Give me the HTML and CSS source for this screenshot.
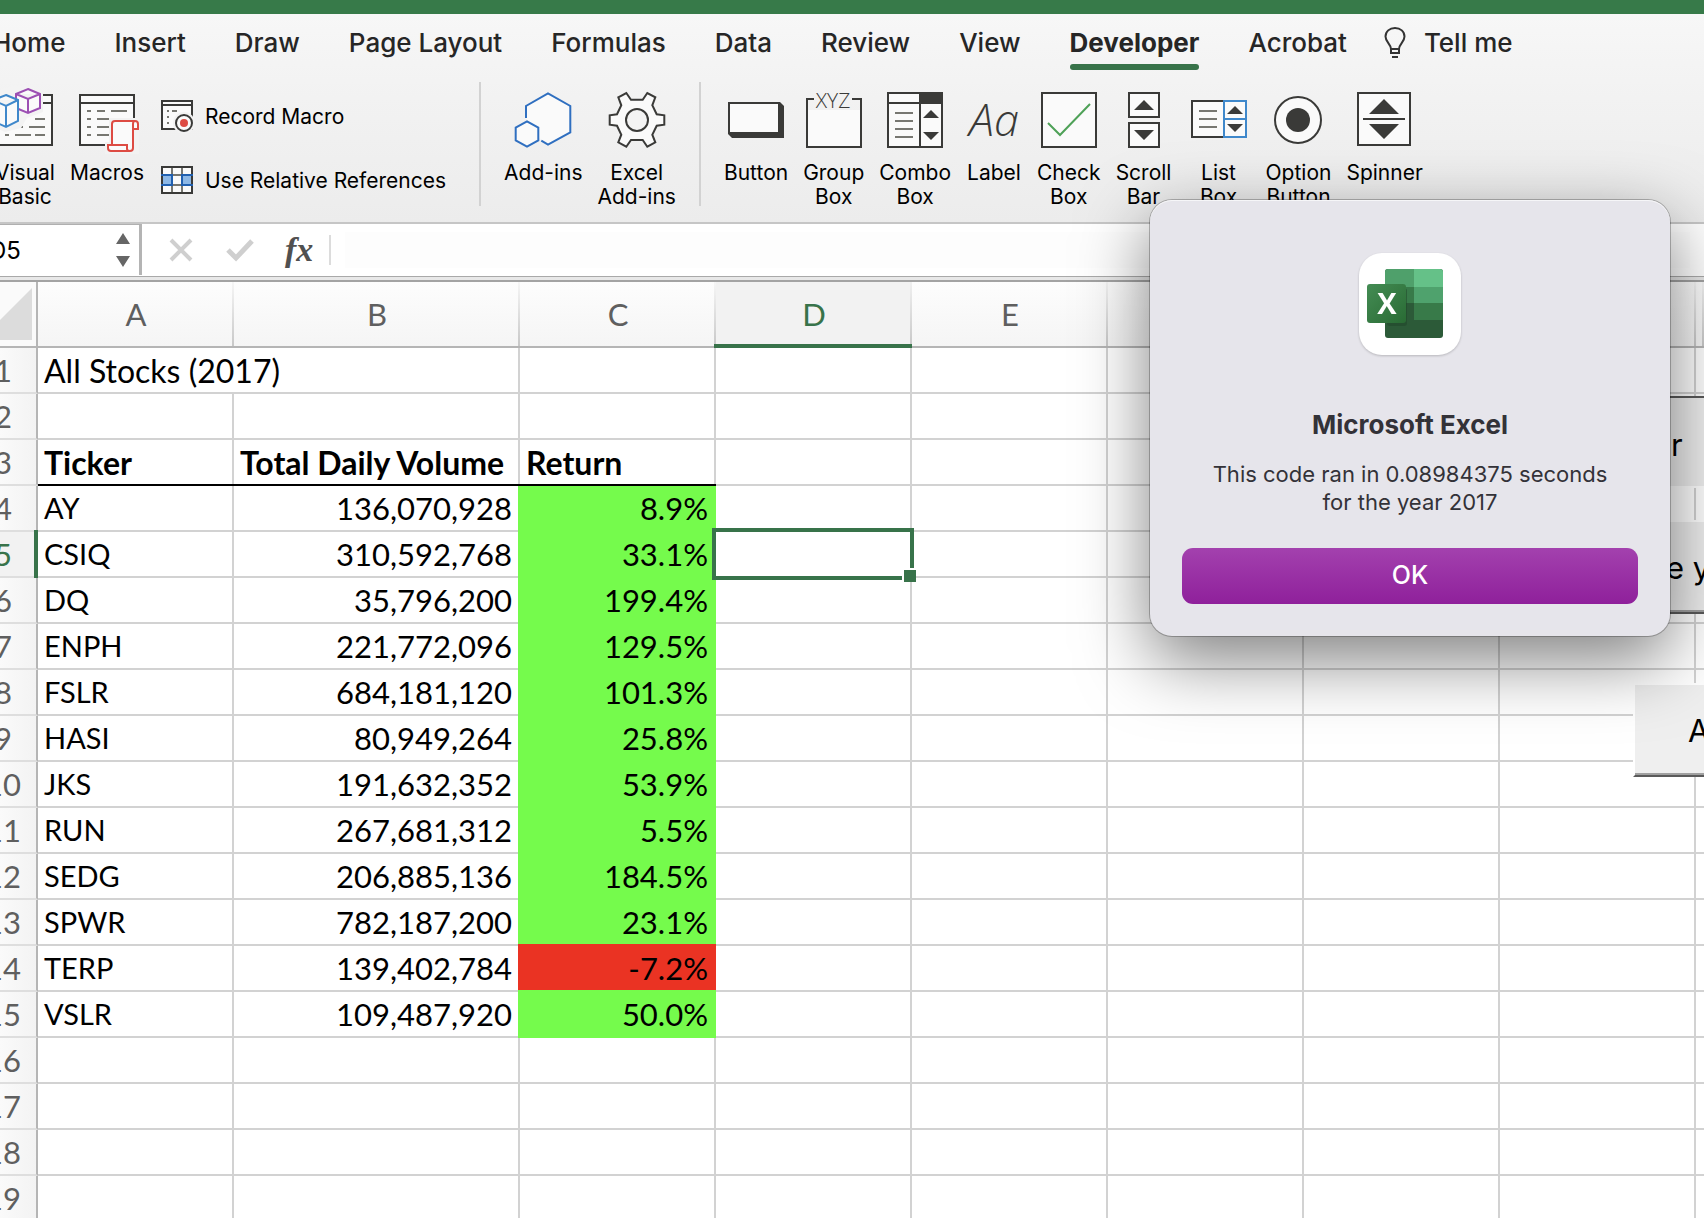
FILE: index.html
```html
<!DOCTYPE html>
<html lang="en">
<head>
<meta charset="utf-8">
<title>Microsoft Excel</title>
<link rel="stylesheet" href="styles.css">
</head>
<body>
<div class="app">
  <div class="titlebar"></div>
  <header class="ribbon">
    <nav class="tabs">
      <a class="tab" href="#">Home</a>
      <a class="tab" href="#">Insert</a>
      <a class="tab" href="#">Draw</a>
      <a class="tab" href="#">Page Layout</a>
      <a class="tab" href="#">Formulas</a>
      <a class="tab" href="#">Data</a>
      <a class="tab" href="#">Review</a>
      <a class="tab" href="#">View</a>
      <a class="tab tab-active" href="#">Developer</a>
      <a class="tab" href="#">Acrobat</a>
      <a class="tab tell-me" href="#">
        <svg class="bulb" width="22" height="32" viewBox="0 0 22 32" fill="none" stroke="#333" stroke-width="2">
          <path d="M7 22C7 17 1.500 15 1.500 9.500C1.500 4.500 5.500 1 11 1S20.500 4.500 20.500 9.500C20.500 15 15 17 15 22V26H7ZM7 22H15M8 30H14"/>
        </svg>
        Tell me
      </a>
    </nav>
    <div class="commands">
      <button class="cmd">
        <svg class="icon" viewBox="0 0 56 56" fill="none" stroke-width="2">
          <path d="M1 3H55V53H1Z" fill="#fafafa" stroke="#3a3a38"/>
          <path d="M1 11H55" stroke="#3a3a38"/>
          <path d="M38 27H48M18 35H26M32 35H48M8 43H12M18 43H34M38 43H48" stroke="#777771"/>
          <path d="M17 -6L31 -7L46 0V20L30 26L24 36L8 40L-8 33V0Z" fill="#f3f3f3"/>
          <path d="M31 -3L43 2V16L31 21L19 16V2ZM19 2L31 7L43 2M31 7V21" fill="#fafafa" stroke="#9c4fb3"/>
          <path d="M9 3L21 8V29L9 35L-4 29V8ZM-4 8L9 14L21 8M9 14V35" fill="#fafafa" stroke="#3f88cb"/>
        </svg>
        <span>Visual<br>Basic</span>
      </button>
      <button class="cmd">
        <svg class="icon" viewBox="0 0 56 56" fill="none" stroke-width="2">
          <path d="M1 3H55V53H1Z" fill="#fafafa" stroke="#3a3a38"/>
          <path d="M1 11H55" stroke="#3a3a38"/>
          <path d="M8 19H12M18 19H26M32 19H48M8 27H12M18 27H36M8 35H12M18 35H30M8 43H12M18 43H30" stroke="#777771"/>
          <path d="M30 26H60V62H26V50H30Z" fill="#f2f2f2"/>
          <path d="M33 53V32C33 30 34 29 36 29H56C58 29 59 30 59 32V37H54V56C54 58 53 59 51 59H32C30 59 29 58 29 56V53H48V57C48 58 49 59 51 59M54 37V32C54 30 55 29 56 29" fill="#fafafa" stroke="#dd4b43"/>
        </svg>
        <span>Macros</span>
      </button>
      <div class="stack">
        <button class="cmd-row">
          <svg class="icon-small" viewBox="0 0 32 32" fill="none" stroke-width="2">
            <path d="M1 1H31V29H1Z" fill="#fafafa" stroke="#3a3a38"/>
            <path d="M1 5H31" stroke="#3a3a38"/>
            <path d="M6 11H8M11 11H16M6 17H8M6 23H8" stroke="#777771"/>
            <circle cx="23" cy="23" r="11" fill="#f2f2f2"/>
            <circle cx="23" cy="23" r="8" fill="#fafafa" stroke="#3a3a38"/>
            <circle cx="23" cy="23" r="4" fill="#dd4b43"/>
          </svg>
          Record Macro
        </button>
        <button class="cmd-row">
          <svg class="icon-small" viewBox="0 0 32 32" fill="none" stroke-width="2">
            <path d="M1 3H31V29H1Z" fill="#fafafa"/>
            <path d="M1 11H11V21H1ZM21 11H31V21H21Z" fill="#8db8e6"/>
            <path d="M11 3V29M21 3V29M11 11H21M11 21H21" stroke="#777771"/>
            <path d="M1 3H31V29H1Z" stroke="#3a3a38"/>
            <path d="M0 11H11V21H0M32 11H21V21H32" stroke="#2160b0"/>
          </svg>
          Use Relative References
        </button>
      </div>
      <div class="divider"></div>
      <button class="cmd">
        <svg class="icon" viewBox="0 0 56 56" fill="#fafafa" stroke="#2f6fc0" stroke-width="2">
          <path d="M11 26V14L33 1.300L55.300 14V40.300L33 52.700L26.300 48.700"/>
          <path d="M12 29.300L23.300 35.700V48.300L12 54.700L.7 48.300V35.700Z"/>
        </svg>
        <span>Add-ins</span>
      </button>
      <button class="cmd">
        <svg class="icon" viewBox="0 0 56 56" fill="#fafafa" stroke="#3a3a38" stroke-width="2">
          <path d="M9.300 5.300L17.300 1L22 7.700H33.700L38.300 1L46.300 5.300L43.300 13.300L47.700 22.300L55.300 23.300V32.700L47.700 33.700L43.300 42.700L46.300 50.300L38.300 54.700L33.700 48H22L17.300 54.700L9.300 50.300L12.300 42.700L8 33.700L.7 32.700V23.300L8 22.300L12.300 13.300Z"/>
          <circle cx="28" cy="28" r="11" fill="#f3f3f3"/>
        </svg>
        <span>Excel<br>Add-ins</span>
      </button>
      <div class="divider"></div>
      <button class="cmd">
        <svg class="icon" viewBox="0 0 56 56">
          <path d="M0 10H52L56 14V46H4L0 42Z" fill="#3a3a38"/>
          <path d="M2 12H50V40H2Z" fill="#fafafa"/>
        </svg>
        <span>Button</span>
      </button>
      <button class="cmd">
        <svg class="icon" viewBox="0 0 56 56">
          <path d="M2 18H54V54H2Z" fill="#fafafa"/>
          <path d="M8 7H1V55H55V7H46" fill="none" stroke="#3a3a38" stroke-width="2"/>
          <text class="glyph-xyz" x="27" y="16" text-anchor="middle">XYZ</text>
        </svg>
        <span>Group<br>Box</span>
      </button>
      <button class="cmd">
        <svg class="icon" viewBox="0 0 56 56">
          <path d="M1 1H55V55H1Z" fill="#fafafa" stroke="#3a3a38" stroke-width="2"/>
          <path d="M32 0H56V12H32Z" fill="#3a3a38"/>
          <path d="M0 11H56M33 11V56" stroke="#3a3a38" stroke-width="2"/>
          <path d="M8 21H26M8 29H26M8 37H26M8 45H26" stroke="#777771" stroke-width="2"/>
          <path d="M36 26L44 18L52 26ZM36 40L44 48L52 40Z" fill="#3a3a38"/>
        </svg>
        <span>Combo<br>Box</span>
      </button>
      <button class="cmd">
        <svg class="icon" viewBox="0 0 56 56">
          <text class="glyph-aa" x="28" y="44" text-anchor="middle">Aa</text>
        </svg>
        <span>Label</span>
      </button>
      <button class="cmd">
        <svg class="icon" viewBox="0 0 56 56" fill="none" stroke-width="2">
          <path d="M1 1H55V55H1Z" fill="#fafafa" stroke="#3a3a38"/>
          <path d="M7 31L19 43L49 12" stroke="#4ea157"/>
        </svg>
        <span>Check<br>Box</span>
      </button>
      <button class="cmd">
        <svg class="icon" viewBox="0 0 56 56">
          <path d="M13 1H43V25H13ZM13 31H43V55H13Z" fill="#fafafa" stroke="#3a3a38" stroke-width="2"/>
          <path d="M18 18L28 8L38 18ZM18 38L28 48L38 38Z" fill="#3a3a38"/>
        </svg>
        <span>Scroll<br>Bar</span>
      </button>
      <button class="cmd cmd-list">
        <svg class="icon" viewBox="0 0 56 56" fill="none" stroke-width="2">
          <path d="M33 9H1V45H33" fill="#fafafa" stroke="#3a3a38"/>
          <path d="M8 19H26M8 27H26M8 35H26" stroke="#777771"/>
          <path d="M33 9H55V45H33ZM33 27H55" fill="#fafafa" stroke="#3f88cb"/>
          <path d="M36 22L44 14L52 22ZM36 32L44 40L52 32Z" fill="#3a3a38"/>
        </svg>
        <span>List<br>Box</span>
      </button>
      <button class="cmd">
        <svg class="icon" viewBox="0 0 56 56">
          <circle cx="28" cy="28" r="23" fill="#fafafa" stroke="#3a3a38" stroke-width="2"/>
          <circle cx="28" cy="28" r="12" fill="#3a3a38"/>
        </svg>
        <span>Option<br>Button</span>
      </button>
      <button class="cmd">
        <svg class="icon" viewBox="0 0 56 56">
          <path d="M1 1H53V53H1Z" fill="#fafafa" stroke="#3a3a38" stroke-width="2"/>
          <path d="M6 27H48" stroke="#3a3a38" stroke-width="2"/>
          <path d="M12 22L27 7L42 22ZM12 32L27 47L42 32Z" fill="#3a3a38"/>
        </svg>
        <span>Spinner</span>
      </button>
    </div>
  </header>

  <div class="formula-bar">
    <div class="name-box">
      <input class="name-input" type="text" value="D5" aria-label="Name box">
      <svg width="14" height="36" viewBox="0 0 14 36" fill="#666"><path d="M0 12L7 1L14 12ZM0 24L7 35L14 24Z"/></svg>
    </div>
    <div class="formula-tools">
      <button class="tool" aria-label="Cancel">
        <svg width="28" height="24" viewBox="0 0 28 24" fill="none" stroke="#cfcfcf" stroke-width="4"><path d="M4 2L24 22M24 2L4 22"/></svg>
      </button>
      <button class="tool" aria-label="Enter">
        <svg width="28" height="24" viewBox="0 0 28 24" fill="none" stroke="#cfcfcf" stroke-width="5"><path d="M2 12L10 20L26 3"/></svg>
      </button>
      <button class="tool fx" aria-label="Insert function">fx</button>
    </div>
    <input class="formula-input" type="text" aria-label="Formula">
  </div>

  <main class="sheet">
    <table class="grid">
      <colgroup>
        <col class="col-rows"><col class="col-std"><col class="col-wide"><col class="col-std"><col class="col-std"><col class="col-std"><col class="col-std"><col class="col-std"><col class="col-std"><col>
      </colgroup>
      <thead>
        <tr><th class="corner"><svg width="52" height="52" viewBox="0 0 52 52"><path d="M52 0V52H0Z" fill="#dcdcdc"/></svg></th><th>A</th><th>B</th><th>C</th><th class="col-active">D</th><th>E</th><th>F</th><th>G</th><th>H</th><th></th></tr>
      </thead>
      <tbody>
        <tr><th>1</th><td class="title" colspan="2">All Stocks (2017)</td><td></td><td></td><td></td><td></td><td></td><td></td><td></td></tr>
        <tr><th>2</th><td></td><td></td><td></td><td></td><td></td><td></td><td></td><td></td><td></td></tr>
        <tr><th>3</th><td class="head">Ticker</td><td class="head">Total Daily Volume</td><td class="head">Return</td><td></td><td></td><td></td><td></td><td></td><td></td></tr>
        <tr class="first"><th>4</th><td class="ticker">AY</td><td class="num">136,070,928</td><td class="num gain">8.9%</td><td></td><td></td><td></td><td></td><td></td><td></td></tr>
        <tr><th class="row-active">5</th><td class="ticker">CSIQ</td><td class="num">310,592,768</td><td class="num gain">33.1%</td><td class="selected"></td><td></td><td></td><td></td><td></td><td></td></tr>
        <tr><th>6</th><td class="ticker">DQ</td><td class="num">35,796,200</td><td class="num gain">199.4%</td><td></td><td></td><td></td><td></td><td></td><td></td></tr>
        <tr><th>7</th><td class="ticker">ENPH</td><td class="num">221,772,096</td><td class="num gain">129.5%</td><td></td><td></td><td></td><td></td><td></td><td></td></tr>
        <tr><th>8</th><td class="ticker">FSLR</td><td class="num">684,181,120</td><td class="num gain">101.3%</td><td></td><td></td><td></td><td></td><td></td><td></td></tr>
        <tr><th>9</th><td class="ticker">HASI</td><td class="num">80,949,264</td><td class="num gain">25.8%</td><td></td><td></td><td></td><td></td><td></td><td></td></tr>
        <tr><th>10</th><td class="ticker">JKS</td><td class="num">191,632,352</td><td class="num gain">53.9%</td><td></td><td></td><td></td><td></td><td></td><td></td></tr>
        <tr><th>11</th><td class="ticker">RUN</td><td class="num">267,681,312</td><td class="num gain">5.5%</td><td></td><td></td><td></td><td></td><td></td><td></td></tr>
        <tr><th>12</th><td class="ticker">SEDG</td><td class="num">206,885,136</td><td class="num gain">184.5%</td><td></td><td></td><td></td><td></td><td></td><td></td></tr>
        <tr><th>13</th><td class="ticker">SPWR</td><td class="num">782,187,200</td><td class="num gain">23.1%</td><td></td><td></td><td></td><td></td><td></td><td></td></tr>
        <tr><th>14</th><td class="ticker">TERP</td><td class="num">139,402,784</td><td class="num loss">-7.2%</td><td></td><td></td><td></td><td></td><td></td><td></td></tr>
        <tr><th>15</th><td class="ticker">VSLR</td><td class="num">109,487,920</td><td class="num gain">50.0%</td><td></td><td></td><td></td><td></td><td></td><td></td></tr>
        <tr><th>16</th><td></td><td></td><td></td><td></td><td></td><td></td><td></td><td></td><td></td></tr>
        <tr><th>17</th><td></td><td></td><td></td><td></td><td></td><td></td><td></td><td></td><td></td></tr>
        <tr><th>18</th><td></td><td></td><td></td><td></td><td></td><td></td><td></td><td></td><td></td></tr>
        <tr><th>19</th><td></td><td></td><td></td><td></td><td></td><td></td><td></td><td></td><td></td></tr>
      </tbody>
    </table>
    <button class="sheet-button sheet-button-1">r</button>
    <button class="sheet-button sheet-button-2">e y</button>
    <button class="sheet-button sheet-button-3">A</button>
  </main>

  <section class="dialog" role="alertdialog" aria-labelledby="dialog-title">
    <svg class="app-icon" width="104" height="104" viewBox="0 0 104 104">
      <defs>
        <linearGradient id="tile" x1="0" y1="0" x2="1" y2="1"><stop offset="0" stop-color="#448c54"/><stop offset="1" stop-color="#296b34"/></linearGradient>
        <clipPath id="book"><rect x="27" y="17" width="58" height="69" rx="3"/></clipPath>
      </defs>
      <rect x="1" y="1" width="102" height="102" rx="23" fill="#fff"/>
      <g clip-path="url(#book)">
        <rect x="27" y="17" width="58" height="69" fill="#2c5a38"/>
        <rect x="27" y="17" width="29" height="18" fill="#4fa06b"/>
        <rect x="56" y="17" width="29" height="18" fill="#65c188"/>
        <rect x="27" y="35" width="29" height="16" fill="#387a49"/>
        <rect x="56" y="35" width="29" height="16" fill="#4fa26d"/>
        <rect x="56" y="51" width="29" height="17" fill="#387a49"/>
        <rect x="29" y="36" width="20" height="38" rx="3" fill="#1d4427" opacity=".5"/>
      </g>
      <rect x="9" y="32" width="39" height="39" rx="3" fill="url(#tile)"/>
      <text class="glyph-x" x="29" y="62" text-anchor="middle">X</text>
    </svg>
    <h1 class="dialog-title" id="dialog-title">Microsoft Excel</h1>
    <p class="dialog-text">This code ran in 0.08984375 seconds<br>for the year 2017</p>
    <button class="ok">OK</button>
  </section>
</div>
</body>
</html>
```

FILE: styles.css
```css
* { box-sizing: border-box; }
body { margin: 0; font-family: Inter, "Liberation Sans", sans-serif; color: #000; background: #fff; }
button { border: 0; padding: 0; background: none; font: inherit; color: inherit; }
input { border: 0; padding: 0; background: none; font: inherit; color: inherit; outline: 0; min-width: 0; }
svg { display: block; flex: none; overflow: visible; }

.app { position: relative; height: 100vh; overflow: hidden; }
.titlebar { height: 14px; background: #377a49; }

/* Ribbon */
.ribbon { background: linear-gradient(#f7f7f7, #f2f2f2 40%, #ececec); border-bottom: 2px solid #c6c6c6; height: 210px; }
.tabs { display: flex; gap: 49px; height: 68px; margin-left: -8px; }
.tab { position: relative; padding-top: 13px; font-size: 26px; line-height: 32px; font-weight: 500; color: #262626; text-decoration: none; white-space: nowrap; }
.tab-active { font-weight: 700; }
.tab-active::after { content: ""; position: absolute; left: 0; right: 0; top: 50px; height: 6px; border-radius: 3px; background: #38734a; }
.tell-me { display: flex; gap: 18px; margin-left: -12px; }
.commands { display: flex; align-items: flex-start; gap: 15px; margin-left: -5px; }
.cmd { display: flex; flex-direction: column; align-items: center; gap: 13px; min-width: 56px; padding-top: 10px; font-size: 21px; line-height: 24px; white-space: nowrap; }
.cmd-list { min-width: 64px; }
.icon { width: 56px; height: 56px; }
.icon-small { width: 32px; height: 32px; }
.stack { display: flex; flex-direction: column; gap: 32px; padding: 18px 10px 0 2px; }
.cmd-row { display: flex; align-items: center; gap: 12px; height: 32px; font-size: 21px; white-space: nowrap; }
.divider { width: 2px; height: 124px; margin: 0 8px; background: #d2d2d2; }
.glyph-xyz { font: 300 21px "Open Sans", sans-serif; fill: #3a3a38; }
.glyph-aa { font: italic 300 45px "Open Sans", sans-serif; fill: #3a3a38; }
.glyph-x { font: 700 29px "Open Sans", sans-serif; fill: #fff; }

/* Formula bar */
.formula-bar { display: flex; align-items: center; height: 58px; border-bottom: 2px solid #a3a3a3; background: linear-gradient(#fff 52px, #a9a9a9 52px 53px, #e8e8e8 53px); }
.name-box { display: flex; align-items: center; align-self: flex-start; width: 142px; height: 51px; margin-right: 25px; border-top: 1px solid #b0b0b0; border-right: 3px solid #b4b4b4; }
.name-box svg { margin-right: 9px; }
.name-input { flex: 1; font-size: 24px; margin-left: -11px; }
.formula-tools { display: flex; align-items: center; gap: 31px; height: 30px; margin-bottom: 4px; padding-right: 16px; border-right: 2px solid #dcdcdc; }
.fx { font: italic 700 34px/30px "Liberation Serif", serif; color: #505050; }
.formula-input { flex: 1; height: 36px; margin: 0 14px 4px; background: #fdfdfd; }

/* Grid */
.sheet { position: relative; }
.grid { width: calc(100% + 32px); margin-left: -32px; table-layout: fixed; border-collapse: separate; border-spacing: 0; font-family: Lato, "Liberation Sans", sans-serif; font-size: 31px; line-height: 36px; }
.col-rows { width: 70px; }
.col-std { width: 196px; }
.col-wide { width: 286px; }
.grid th { position: relative; height: 46px; padding: 0; font-weight: 400; color: #5f5f5f; }
.grid thead th { height: 66px; background: linear-gradient(#f6f6f6, #c8c8c8) right / 2px 100% no-repeat, linear-gradient(#fdfdfd, #f5f5f5); border-bottom: 2px solid #b5b5b5; }
.grid thead .corner { background: #fafafa; border-right: 2px solid #b5b5b5; }
.corner svg { margin-left: 12px; }
.grid thead .col-active { color: #38734a; background: linear-gradient(#f0f0f0, #c8c8c8) right / 2px 100% no-repeat, #f2f2f2; }
.col-active::after { content: ""; position: absolute; left: -2px; right: 0; bottom: -2px; height: 4px; background: #38734a; }
.grid tbody th { padding-left: 2px; background: linear-gradient(90deg, #fbfbfb 40%, #f3f3f3); border-right: 2px solid #b5b5b5; border-bottom: 2px solid #dedede; }
.grid tbody .row-active { color: #38734a; background: #f2f2f2; }
.row-active::after { content: ""; position: absolute; right: -2px; top: -2px; bottom: -2px; width: 4px; background: #38734a; }
.grid td { height: 46px; padding: 0 6px; border-right: 2px solid #d2d2d2; border-bottom: 2px solid #d2d2d2; white-space: nowrap; }
.grid td:last-child { border-right: 0; }
.grid .title { padding-top: 2px; font-size: 32px; }
.grid .head { padding-top: 2px; font-size: 32px; font-weight: 700; }
.grid .ticker { font-size: 29px; }
.grid .num { text-align: right; }
.grid .gain { background: #75fb4c; border-color: #75fb4c; box-shadow: -2px 0 0 #75fb4c, 0 -2px 0 #75fb4c, -2px -2px 0 #75fb4c; }
.grid .loss { background: #ea3323; border-color: #ea3323; box-shadow: -2px 0 0 #ea3323, 0 -2px 0 #ea3323, -2px -2px 0 #ea3323; }
.grid .first .ticker, .grid .first .num { box-shadow: 0 -2px 0 #000; }
.grid .first .gain { box-shadow: 0 -2px 0 #000, -2px 0 0 #75fb4c; }
.grid .selected { position: relative; }
.selected::before { content: ""; position: absolute; inset: -4px; border: 4px solid #38734a; }
.selected::after { content: ""; position: absolute; right: -6px; bottom: -6px; width: 12px; height: 12px; border: 2px solid #fff; border-right: 0; border-bottom: 0; background: #38734a; }

/* Form buttons that float on the sheet */
.sheet-button { position: absolute; right: -80px; background: #efefef; text-align: left; font-size: 31px; color: #000; }
.sheet-button-1 { top: 114px; left: 1500px; height: 92px; padding: 4px 0 0 171px; border-top: 2px solid #5a5a5a; border-bottom: 2px solid #fff; }
.sheet-button-2 { top: 238px; left: 1500px; height: 94px; padding-left: 166px; border-top: 2px solid #fff; border-bottom: 2px solid #5a5a5a; box-shadow: inset 0 -2px 0 #a0a0a0; }
.sheet-button-3 { top: 401px; left: 1633px; height: 94px; padding-left: 53px; border-top: 2px solid #fff; border-left: 2px solid #fff; border-bottom: 2px solid #5a5a5a; box-shadow: inset 0 -2px 0 #a0a0a0; }

/* Alert */
.dialog { position: absolute; top: 200px; left: 1150px; width: 520px; padding: 52px 32px 32px; display: flex; flex-direction: column; align-items: center; border-radius: 22px; background: #e6e5eb; color: #333238; box-shadow: inset 0 1px 0 #f6f6f8, 0 0 0 1px rgba(0, 0, 0, .25), 0 24px 70px rgba(0, 0, 0, .5); }
.app-icon { filter: drop-shadow(0 1px 1px rgba(0, 0, 0, .2)); }
.dialog-title { margin: 53px 0 0; font-size: 26px; line-height: 32px; font-weight: 700; }
.dialog-text { margin: 19px 0 0; font-size: 22px; line-height: 28px; text-align: center; white-space: nowrap; }
.ok { align-self: stretch; height: 56px; margin-top: 32px; padding-bottom: 2px; border-radius: 11px; background: linear-gradient(#a341ae, #8f209b); color: #fff; font-size: 25px; font-weight: 500; }
```
